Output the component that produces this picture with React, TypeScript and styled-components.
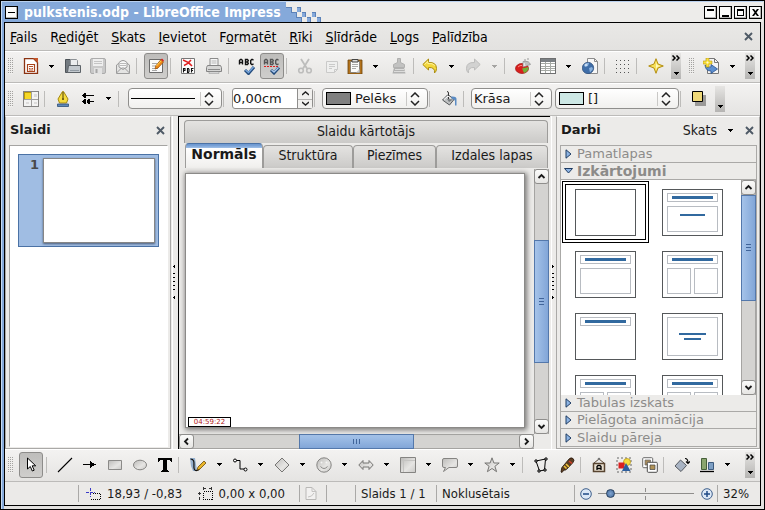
import React from 'react';
import styled, { createGlobalStyle, css } from 'styled-components';

const ui = '"DejaVu Sans Condensed", "DejaVu Sans", sans-serif';
const wide = '"DejaVu Sans", sans-serif';

const Global = createGlobalStyle`
  * { box-sizing: border-box; }
  body { margin: 0; background: #ecebe9; font-family: ${ui}; font-size: 14px; color: #1a1a1a; }
  button, input, select {
    font: inherit; color: inherit; margin: 0; padding: 0; border: 0; background: none; border-radius: 0;
  }
  svg { display: block; flex: none; }
`;

/* ---------- window frame ---------- */

const Frame = styled.div`
  display: flex;
  flex-direction: column;
  min-height: 100vh;
  border: 1px solid #000;
  padding: 0 3px 3px;
  background: linear-gradient(90deg, #c8dcf2 0 1px, #85a9da 1px 3px, transparent 3px), #e2e1df;
`;
const TitleBar = styled.header`
  display: flex;
  height: 21px;
  margin: 0 -2px;
  background: #edecea;
  border-top: 1px solid #b9d0ee;
`;
const TitleLabel = styled.div`
  display: flex;
  align-items: center;
  gap: 6px;
  padding: 0 5px 0 3px;
  background: #85a9da;
  color: #fff;
`;
const TitleText = styled.h1`
  margin: 0;
  font-size: 14px;
  line-height: 18px;
  font-weight: 700;
  white-space: nowrap;
`;
const WindowButtons = styled.div`
  display: flex;
  align-items: center;
  gap: 2px;
  margin-left: auto;
  padding-right: 1px;
`;
const WindowButton = styled.button`
  width: 13px;
  height: 13px;
  border: 1px solid #000;
  background: #fbfbfa;
  box-shadow: inset -1px -1px 0 #b5b4b2;
`;
const Body = styled.div`
  flex: 1;
  display: flex;
  flex-direction: column;
  border: 1px solid #000;
  background: #ecebe9;
`;

/* ---------- bars ---------- */

const MenuBar = styled.nav`
  display: flex;
  align-items: center;
  gap: 13px;
  height: 28px;
  padding: 0 7px 0 5px;
  background: linear-gradient(#e9e8e6, #e3e2e0);
  border-bottom: 1px solid #bcbbb9;
`;
const MenuItem = styled.button`
  line-height: 18px;
  color: #000;
  white-space: nowrap;
`;
const CloseButton = styled.button`
  width: 10px;
  height: 18px;
  margin-left: auto;
  display: grid;
  place-items: center;
`;
const PanelClose = styled(CloseButton)`
  margin: 0 5px 0 0;
`;
const ToolBar = styled.div<{ $height: number }>`
  display: flex;
  align-items: center;
  height: ${p => p.$height}px;
  padding-bottom: 2px;
  border-top: 1px solid #fff;
  border-bottom: 1px solid #bcbbb9;
  background: linear-gradient(#f3f2f1, #e5e4e2);
`;
const ToolGroup = styled.div<{ $width?: number }>`
  display: flex;
  align-items: center;
  ${p => (p.$width ? css`width: ${p.$width}px; flex: none;` : css`flex: 1; min-width: 0;`)}
`;
const Grip = styled.span`
  width: 13px;
  height: 16px;
  flex: none;
  padding: 0 5px 0 3px;
  background:
    repeating-linear-gradient(#0000 0 1px, #f0efed 1px 2px),
    repeating-linear-gradient(90deg, #a3a2a0 0 1px, #0000 1px 2px);
  background-clip: content-box;
  background-origin: content-box;
`;
const Tool = styled.button<{ $width?: number }>`
  width: ${p => p.$width ?? 25}px;
  height: 26px;
  flex: none;
  display: grid;
  place-items: center;
  &[aria-pressed='true'] {
    width: 24px;
    margin: 0 ${p => (p.$width ?? 25) - 24}px 0 0;
    border: 1px solid #8d8c8a;
    border-radius: 3px;
    background: linear-gradient(#bebdbb, #cfcecc);
  }
`;
const Divider = styled.span<{ $width: number }>`
  width: ${p => p.$width}px;
  height: 16px;
  flex: none;
  padding-left: 1px;
  background: linear-gradient(#bdbcba, #bdbcba) content-box no-repeat 0 0 / 1px 100%;
`;
const Gap = styled.span<{ $width: number }>`
  width: ${p => p.$width}px;
  flex: none;
`;
const Overflow = styled.button`
  width: 10px;
  height: 26px;
  flex: none;
  display: flex;
  flex-direction: column;
  align-items: center;
  justify-content: space-between;
  padding: 2px 0 4px;
  background: linear-gradient(#e6e5e3, #b5b4b2);
`;

/* ---------- fields ---------- */

const Combo = styled.label<{ $width: number }>`
  display: flex;
  align-items: center;
  gap: 4px;
  width: ${p => p.$width}px;
  height: 21px;
  flex: none;
  padding: 0 7px 0 2px;
  border: 1px solid #8f8e8c;
  border-radius: 4px;
  background: linear-gradient(#fff, #f1f0ee);
  font-family: ${wide};
  font-size: 13px;
`;
const ComboSelect = styled.select`
  appearance: none;
  width: 100%;
  height: 18px;
  line-height: 18px;
  outline: none;
`;
const Swatch = styled.span<{ $color: string }>`
  width: 25px;
  height: 13px;
  flex: none;
  margin-left: 1px;
  border: 1px solid #000;
  background: ${p => p.$color};
`;
const ComboFace = styled.span<{ $line?: boolean }>`
  flex: 1;
  min-width: 0;
  ${p => p.$line && css`background: linear-gradient(#000, #000) 0 50% / 64px 1px no-repeat;`}
`;
const ComboArrows = styled.span`
  padding-left: 3px;
  border-left: 1px solid #c9c8c6;
  pointer-events: none;
`;
const Spin = styled.div`
  display: flex;
  width: 81px;
  height: 21px;
  flex: none;
  border: 1px solid #8f8e8c;
  border-radius: 3px;
  background: #fff;
  font-size: 13px;
  font-family: ${wide};
`;
const SpinInput = styled.input`
  flex: 1;
  min-width: 0;
  line-height: 18px;
`;
const SpinButtons = styled.div`
  width: 15px;
  display: grid;
  grid-template-rows: 1fr 1fr;
  border-left: 1px solid #8f8e8c;
  background: #f1f0ee;
`;
const SpinButton = styled.button`
  display: grid;
  place-items: center;
  & + & { border-top: 1px solid #b5b4b2; }
`;

/* ---------- main area ---------- */

const Main = styled.main`
  display: flex;
  flex: 1 1 333px;
`;
const SidePanel = styled.aside<{ $width: number }>`
  display: flex;
  flex-direction: column;
  width: ${p => p.$width}px;
  flex: none;
  border: 1px solid #aaa9a7;
  border-top-color: #fff;
  background: #ecebe9;
`;
const PanelHead = styled.div`
  display: flex;
  align-items: center;
  height: 28px;
  padding: 0 0 2px 4px;
`;
const PanelTitle = styled.h2`
  margin: 0 auto 0 0;
  font: 700 13px/18px ${wide};
`;
const ViewMenu = styled.button`
  display: flex;
  align-items: center;
  gap: 11px;
  margin-right: 11px;
  line-height: 18px;
`;
const SlideList = styled.ol`
  flex: 1;
  margin: 0 2px 1px 3px;
  padding: 8px;
  list-style: none;
  border: 1px solid #a5a4a2;
  border-right-color: #fff;
  border-bottom-color: #fff;
  background: #fff;
`;
const SlideItem = styled.li`
  display: flex;
  gap: 4px;
  height: 93px;
  padding: 3px 3px 3px 11px;
  border: 1px solid #4b72a5;
  background: #a0bde3;
`;
const SlideNumber = styled.span`
  font: 700 13px/14px ${wide};
  color: #4a4a4a;
`;
const SlideThumb = styled.span`
  flex: 1;
  border: 1px solid #868686;
  background: #fff;
  box-shadow: 0 1px 2px #4a5c78;
`;
const Splitter = styled.div<{ $width: number }>`
  width: ${p => p.$width}px;
  flex: none;
  display: grid;
  place-items: center;
  background: linear-gradient(90deg, #ecebe9 0 1px, #fff 1px 2px, #ecebe9 2px);
`;
const Center = styled.section`
  flex: 1;
  min-width: 0;
  display: flex;
  flex-direction: column;
  border-top: 1px solid #000;
  border-left: 1px solid #000;
`;
const TabArea = styled.div`
  padding: 3px 2px 0 5px;
`;
const tabFace = css`
  border: 1px solid #9d9c9a;
  border-bottom: 0;
  border-radius: 4px 4px 0 0;
  background: linear-gradient(#e4e3e1, #cbcac8);
  white-space: nowrap;
`;
const TopTab = styled.button`
  display: block;
  width: 100%;
  height: 23px;
  padding-bottom: 2px;
  ${tabFace}
`;
const TabRow = styled.div`
  display: grid;
  grid-template-columns: 78fr 90fr 83fr 112fr;
  height: 23px;
  padding-left: 1px;
  align-items: end;
`;
const Tab = styled.button`
  height: 23px;
  padding-bottom: 4px;
  ${tabFace}
  &[aria-selected='true'] {
    height: 25px;
    padding-bottom: 4px;
    font: 700 14px/18px ${wide};
    border-color: #4b72a5 #9d9c9a;
    background: linear-gradient(#6f9ad2 0 1px, #a0c0e8 4px, #fff 4px, #f0efed);
  }
`;
const View = styled.div`
  flex: 1;
  display: grid;
  grid-template-columns: 1fr 16px;
  grid-template-rows: 1fr 15px;
`;
const Stage = styled.div`
  display: flex;
  padding: 7px 9px 6px 6px;
`;
const Slide = styled.div`
  position: relative;
  flex: 1;
  border: 1px solid #8b8a88;
  background: #fff;
  box-shadow: 1px 1px 5px 1px #7a7977;
`;
const Clock = styled.div`
  position: absolute;
  left: 2px;
  bottom: 0;
  width: 43px;
  height: 10px;
  border: 1px solid #000;
  background: #fff;
  color: #b01818;
  font: 7px/8px ${wide};
  text-align: center;
`;

/* ---------- scroll bars ---------- */

const Scroll = styled.div<{ $across?: boolean }>`
  display: flex;
  flex-direction: ${p => (p.$across ? 'row' : 'column')};
  ${p => (p.$across ? 'height: 15px;' : 'width: 15px;')}
  background: #d4d3d1;
  border: solid #a5a4a2;
  border-width: ${p => (p.$across ? '1px 0' : '0 1px')};
`;
const StageScroll = styled(Scroll)`
  margin-top: 3px;
`;
const ScrollButton = styled.button<{ $across?: boolean }>`
  width: 15px;
  height: 15px;
  flex: none;
  margin: ${p => (p.$across ? '-1px 0' : '0 -1px')};
  display: grid;
  place-items: center;
  border: 1px solid #8f8e8c;
  border-radius: 3px;
  background: linear-gradient(#fbfbfa, #e6e5e3);
`;
const ScrollGap = styled.span<{ $size: number }>`
  flex: ${p => p.$size} 1 0px;
`;
const ScrollThumb = styled.span<{ $size: number; $across?: boolean }>`
  flex: ${p => p.$size} 1 0px;
  margin: ${p => (p.$across ? '-1px 0' : '0 -1px')};
  display: grid;
  place-items: center;
  border: 1px solid #5478ab;
  background: linear-gradient(${p => (p.$across ? '180deg' : '90deg')}, #a5c3e9, #82a6d8);
`;

/* ---------- task pane ---------- */

const Sections = styled.div`
  flex: 1;
  display: flex;
  flex-direction: column;
  margin: 0 2px 1px 3px;
  border: 1px solid #aaa9a7;
`;
const Section = styled.button<{ $edge?: 'bottom' }>`
  display: flex;
  align-items: center;
  gap: 4px;
  height: 17px;
  flex: none;
  padding-left: 3px;
  border-bottom: 1px solid #aaa9a7;
  border-bottom-width: ${p => (p.$edge === 'bottom' ? 0 : 1)}px;
  color: #8c8b89;
  font: 13px/16px ${wide};
  &[aria-expanded='true'] { font: 700 14px/16px ${wide}; }
`;
const LayoutPane = styled.div`
  flex: 1 1 0px;
  min-height: 0;
  overflow: hidden;
  display: flex;
  background: #fff;
`;
const LayoutGrid = styled.div`
  flex: 1;
  display: grid;
  grid-template-columns: 87px 87px;
  grid-auto-rows: 62px;
  align-content: start;
  padding: 1px 0 0 1px;
`;
const LayoutButton = styled.button`
  display: grid;
  place-items: center;
  border: 4px double transparent;
  &[aria-pressed='true'] { border-color: #000; }
`;

/* ---------- status bar ---------- */

const Status = styled.footer`
  display: flex;
  align-items: center;
  height: 23px;
  padding-left: 73px;
  font-size: 13px;
  background: #ebeae8;
`;
const Cell = styled.div<{ $width?: number }>`
  display: flex;
  align-items: center;
  gap: 6px;
  ${p => (p.$width ? css`width: ${p.$width}px; flex: none;` : css`flex: 1;`)}
  height: 17px;
  padding-left: 5px;
  border-left: 1px solid #aaa9a7;
  white-space: nowrap;
`;
const PairCell = styled(Cell)`
  justify-content: space-between;
  padding: 0 14px 0 7px;
`;
const Pair = styled.span`
  display: flex;
  align-items: center;
  gap: 6px;
`;
const ZoomButton = styled.button`
  width: 12px;
  height: 12px;
`;
const Zoom = styled.input`
  appearance: none;
  width: 97px;
  height: 12px;
  background:
    linear-gradient(#8f8e8c, #8f8e8c) 0 5px / 96px 1px no-repeat,
    linear-gradient(#8f8e8c, #8f8e8c) 47px 0 / 1px 4px no-repeat,
    linear-gradient(#8f8e8c, #8f8e8c) 47px 8px / 1px 4px no-repeat;
  &::-webkit-slider-thumb {
    appearance: none;
    width: 9px;
    height: 9px;
    border: 1px solid #27415f;
    border-radius: 50%;
    background: radial-gradient(#7fa3cf, #44699a);
  }
`;

/* ---------- icons ---------- */

const Icon = ({ w = 16, h = 16, children, sharp }: { w?: number; h?: number; sharp?: boolean; children: React.ReactNode }) => (
  <svg width={w} height={h} viewBox={`0 0 ${w} ${h}`} fill="none" shapeRendering={sharp ? 'crispEdges' : undefined} aria-hidden="true">
    {children}
  </svg>
);

const Caret = ({ c = '#000' }: { c?: string }) => (
  <Icon w={5} h={3} sharp><path d="M0 0h5v1H0zM1 1h3v1H1zM2 2h1v1H2z" fill={c} /></Icon>
);
const More = () => (
  <Icon w={8} h={6}><path d="M.5.5 3 3 .5 5.500M4.500.5 7 3 4.500 5.500" stroke="#000" strokeWidth="1.500" /></Icon>
);
const Cross = () => (
  <Icon w={9} h={9}><path d="m1 1 7 7M8 1 1 8" stroke="#4f5a66" strokeWidth="1.900" /></Icon>
);
const Chevron = ({ turn = 0 }: { turn?: number }) => (
  <Icon w={9} h={9}><path d="m1.500 6 3-3 3 3" transform={`rotate(${turn} 4.500 4.500)`} stroke="#1a1a1a" strokeWidth="1.800" /></Icon>
);
const UpDown = () => (
  <Icon w={10} h={14}><path d="m1 5 4-4 4 4M1 9l4 4 4-4" stroke="#222" strokeWidth="1.500" /></Icon>
);
const Half = ({ down }: { down?: boolean }) => (
  <Icon w={7} h={5}><path d={down ? 'm0 1 3.500 3L7 1' : 'M0 4 3.500 1 7 4'} stroke="#222" strokeWidth="1.400" /></Icon>
);

const SpellLetters = ({ c }: { c: string }) => (
  <path d="M1.500 6.500v-4l1-1h1l1 1v4M2 4.500h2.500M7.500 1.500h2l.8 1-.8 1.500.8 1.500-.8 1h-2zM8 4h2M15.500 2.200l-1-.7h-.8l-1 1v3l1 1h.8l1-.7" stroke={c} strokeWidth="1.400" />
);

const icons: Record<string, React.ReactNode> = {
  deck: <Icon><path d="M1.500.5h9l4 4v11h-13z" fill="#fff" stroke="#8b3312" strokeWidth="1.300" /><path d="M10 0h5v5z" fill="#c4562a" /><path d="M4.500 6.500h7v7h-7z" fill="#fff" stroke="#a8431b" strokeWidth="1.200" /><path d="M6 8.500h4M6 10.500h1.500M8.500 10.500H10M6 12h4" stroke="#b5522a" /></Icon>,
  folder: <Icon><path d="M.5 1.500h5l1 2v4l-3 7h-3z" fill="#737a80" stroke="#4d5358" /><path d="M5.500 1.500h6l1 1V8h-7z" fill="#eceeef" stroke="#8e9296" /><path d="M2.500 14.500 3.500 7.500h12v7z" fill="#c3c9ce" stroke="#5d6368" /><path d="M5 12.500h9" stroke="#929ba3" /></Icon>,
  save: <Icon><rect x=".5" y=".5" width="15" height="15" rx="1.500" fill="#c9c9c9" stroke="#acacac" /><path d="M3 1h10v7H3z" fill="#eee" /><path d="M4 3.500h8M4 5.500h8" stroke="#c4c4c4" /><path d="M4 10h8v6H4z" fill="#e2e2e2" /><path d="M5.500 11h2v4h-2z" fill="#a6a6a6" /></Icon>,
  mail: <Icon><path d="M1.500 7 8 2.500 14.500 7v8.500h-13z" fill="#e4e4e3" stroke="#9c9c9c" /><path d="M4 9V4.500Q8 .5 12 4.500V9L8 11.500z" fill="#f8f8f8" stroke="#9a9a9a" /><path d="M5 5.500h6M5 7.500h6" stroke="#bbb" /><path d="m1.500 15 5-5h3l5 5" stroke="#9c9c9c" /></Icon>,
  edit: <Icon><path d="M1.500 1.500h13v13h-13z" fill="#fafafa" stroke="#6b6b6b" /><path d="M4 5.500h5M4 8h4M4 10.500h6M4 12.500h5" stroke="#a7a7a7" /><path d="m13 1.500 2.500 2.500L10 10l-3 1 .8-3.200z" fill="#f08a18" stroke="#924c08" strokeWidth=".7" /><path d="m13 1.500 1-1L16 2.500l-1 1z" fill="#d22" /><path d="m13 3-4.500 5" stroke="#ffd24b" /></Icon>,
  pdf: <Icon><path d="M1.500.5h13v15h-13z" fill="#fcfcfc" stroke="#777" /><path d="M3 2q5 1.500 9 6M4 7.500Q8 6 11 2" stroke="#e02020" strokeWidth="1.500" /><path d="M3.500 14.500v-4H5v2H3.500M7.500 10.500v4h1l.5-1v-2l-.5-1zM11.500 14.500v-4H13.500M11.500 12.500h1.500" stroke="#111" strokeWidth="1.100" /></Icon>,
  print: <Icon><path d="M4 .5h8v7H4z" fill="#f6f6f6" stroke="#8b8b8b" /><path d="M5.500 3h5M5.500 5h5" stroke="#b5b5b5" /><path d="M1.500 7.500h13l1 2v4H.5v-4z" fill="#d6d6d5" stroke="#848484" /><path d="M2 11.500h12" stroke="#8b8b8b" /><path d="M3 14h10v1.500H3z" fill="#eee" stroke="#999" strokeWidth=".6" /></Icon>,
  spell: <Icon w={18} h={17}><SpellLetters c="#111" /><path d="m7 12 3.500 3.500L16 9" stroke="#234b7c" strokeWidth="3" /><path d="m7.500 12 3 2.500L15.500 9" stroke="#78a6dc" strokeWidth="1.500" /></Icon>,
  autospell: <Icon w={18} h={17}><SpellLetters c="#555" /><path d="M1 8.500h14" stroke="#e02020" strokeDasharray="2 1" /><path d="m8 12 3 3 5-5.500" stroke="#234b7c" strokeWidth="3" /><path d="m8.500 12 2.500 2 4.500-4.500" stroke="#a8c8ee" strokeWidth="1.400" /></Icon>,
  cut: <Icon><path d="m4 1 6 9.500M12 1 6 10.500" stroke="#bdbdbc" strokeWidth="1.800" /><circle cx="4" cy="12.500" r="2.300" stroke="#bdbdbc" strokeWidth="1.600" /><circle cx="12" cy="12.500" r="2.300" stroke="#bdbdbc" strokeWidth="1.600" /></Icon>,
  copy: <Icon><path d="M2.500 3.500h11v8l-3 3h-8z" fill="#efefee" stroke="#cacac9" /><path d="M5 6.500h6M5 8.500h6M5 10.500h3M10.500 14.500v-3h3" stroke="#cacac9" /></Icon>,
  paste: <Icon><path d="M1 2h14v14H1z" fill="#b3731d" stroke="#6d4208" strokeWidth=".8" /><path d="M3.500 3.500h9v11h-9z" fill="#fbfbfa" stroke="#777" strokeWidth=".8" /><path d="M5 6.500h6M5 8.500h6M5 10.500h4" stroke="#aaa" /><path d="M5 1.500h6V4H5z" fill="#dadada" stroke="#444" /><path d="M12.500 11v3.500H9z" fill="#c9c9c9" /></Icon>,
  brush: <Icon><path d="M6.500.5h3v4l4 2v3h-11v-3l4-2z" fill="#c2c2c1" stroke="#b0b0af" /><path d="M3 9.500h10l1.500 6h-13z" fill="#b2b2b1" /><path d="M4 11.500h9M3 13.500h11" stroke="#dcdcdb" /></Icon>,
  undo: <Icon><path d="M.8 6.500 6.500 1v3.500q8-.5 8 6 0 3-2 4.500.8-6-6-5.500V12z" fill="#f3d73c" stroke="#ab8d10" /><path d="M2.500 6.500 5.800 3.500v2q5-.5 7 2" stroke="#fff3a0" /></Icon>,
  redo: <Icon><path d="M15.200 6.500 9.500 1v3.500q-8-.5-8 6 0 3 2 4.500-.8-6 6-5.500V12z" fill="#d2d2d1" stroke="#bdbdbc" /></Icon>,
  pie: <Icon><ellipse cx="7" cy="10.500" rx="6.500" ry="5" fill="#d8201e" stroke="#9c100f" strokeWidth=".7" /><path d="M7 10.500 13.500 9q.5 4-4.500 6z" fill="#6fb13a" /><path d="M8 9V3.500q6-1 7.500 3z" fill="#e4e4e3" stroke="#8c8c8c" strokeWidth=".7" /><path d="M9 2h2M12 1h2M8.500 4h5M10 6h5" stroke="#999" /><path d="M3 9q2-2 4-1.500" stroke="#ff8b80" /></Icon>,
  table: <Icon sharp><path d="M.5.5h15v15H.5z" fill="#fff" stroke="#6e6f70" /><path d="M1 1h14v3H1z" fill="#7b8084" /><path d="M1 5.500h14M1 8.500h14M1 10.500h14M1 12.500h14M5.500 4v11M10.500 4v11" stroke="#a6aaa5" /></Icon>,
  web: <Icon><path d="M5.500.5h7l3 3v12h-10z" fill="#f7f7f7" stroke="#8c8c8c" /><path d="M12.500.5v3h3" stroke="#8c8c8c" /><circle cx="6" cy="10" r="5.700" fill="#3f6ea8" stroke="#2a4b78" strokeWidth=".7" /><path d="M2 7q3-3 5-2L6 8 3 9zM7 10l3-1 1 2-3 3.500z" fill="#8bb2de" /><circle cx="4" cy="7" r="1.300" fill="#c8dcf2" /></Icon>,
  grid: <Icon w={13} h={13} sharp>{[0, 4, 8, 12].map(y => [0, 4, 8, 12].map(x => <rect key={`${x}-${y}`} x={x} y={y} width="1" height="1" fill="#555" />))}</Icon>,
  star4: <Icon><path d="M8 .7 10 6l5.300 2L10 10 8 15.300 6 10 .7 8 6 6z" fill="#f7e05a" stroke="#b38d10" /><path d="m8 4 1 3 3 1-3 1-1 3z" fill="#fff9c4" /></Icon>,
  newslide: <Icon><path d="M4.500.5h7l4 4v11h-11z" fill="#f5f5f5" stroke="#777" /><path d="M11.500.5v4h4" stroke="#777" /><path d="M2 7q1 3 6 2V6.500l6.500 4.500L8 15.500V13Q2.500 13 2 7z" fill="#5c8fd0" stroke="#28518a" strokeWidth=".8" /><path d="M3 0h3v3h3v3H6v3H3V6H0V3h3z" fill="#f8e040" stroke="#b59412" strokeWidth=".6" /><path d="M3.500 4.500h2M4.500 3.500v2" stroke="#fffbd0" /></Icon>,
  styles: <Icon sharp><path d="M.5.5h15v15H.5z" fill="#f3f3f2" stroke="#858482" /><path d="M1 1h7v7H1z" fill="#f5d726" stroke="#b8980a" /><path d="M8.500 1v14M1 8.500h14" stroke="#a09f9d" /><path d="M3 11h3v2H3zM11 11h3v2h-3zM11 3h3v3h-3z" fill="#dcdbda" /></Icon>,
  pen: <Icon><path d="M7.500.5 3 8l1.500 4h7L13 8 8.500.5z" fill="#f5dc3e" stroke="#a68810" /><path d="M8 1v6" stroke="#4c3f08" /><circle cx="8" cy="8" r="1" fill="#4c3f08" /><path d="M2.500 13h11v2.500h-11z" fill="#5f88b8" stroke="#2e4f78" strokeWidth=".8" /></Icon>,
  arrows: <Icon w={14} h={12} sharp><path d="M1 2h12v1H1zM1 2h2v1H1zM2 1h2v3H2zM3 0h2v5H3zM6 8h7v1H6zM1 8h3v1H1zM2 7h2v3H2zM3 6h2v5H3zM6 7h2v3H6zM7 6h2v5H7z" fill="#000" /></Icon>,
  bucket: <Icon><path d="m7 3.500 6 5-4.500 5.500L1.500 9z" fill="#bfc1c2" stroke="#55585a" /><path d="M7.500 8V2q0-1.500-1.500-1.500" stroke="#333" /><path d="M3 8.500 7 5l3 2.500" stroke="#fff" /><path d="M6 8l2 3 4-2.500z" fill="#777b7e" /><path d="M10 5.500q6-.5 5.500 3v6H14V10q-.5-2-3-2z" fill="#5b8cc4" /></Icon>,
  shadow: <Icon><path d="M4 4h11v11H4z" fill="#9b9a98" /><path d="M1.500.5h10v10h-10z" fill="#efd97a" stroke="#000" /></Icon>,
  select: <Icon w={12}><path d="M2.500 1v11l2.800-2.500 2 4.500 1.900-.8-2-4.400h3.500z" fill="#fff" stroke="#000" /></Icon>,
  line: <Icon><path d="M1 15 15 1" stroke="#000" strokeWidth="1.100" /></Icon>,
  arrow: <Icon w={13} h={7} sharp><path d="M0 3h11v1H0zM7 1h2v5H7zM9 2h2v3H9zM11 3h2v1h-2zM7 0h1v7H7z" fill="#000" /></Icon>,
  rect: <Icon><path d="M1.500 3.500h13v9h-13z" fill="url(#g)" stroke="#8b8a88" /></Icon>,
  ellipse: <Icon><ellipse cx="8" cy="8" rx="6.500" ry="4.800" fill="url(#g)" stroke="#858482" /></Icon>,
  text: <Icon sharp><path d="M1 1h14v4h-1l-1-2h-3v10l2 1v1H4v-1l2-1V3H3L2 5H1z" fill="#000" /></Icon>,
  curve: <Icon w={18}><path d="M1 1h5l2 13H4L2 9z" fill="#7ea0c6" opacity=".8" /><path d="M1.500 2c5 0 3 6 3.500 9 .5 4 5 3 6-1" stroke="#111" strokeWidth="1.200" /><path d="m8 13 1-3 6-6 2 2-6 6z" fill="#e9b52a" stroke="#6c4c0a" strokeWidth=".8" /></Icon>,
  connector: <Icon><path d="M3 3.500h5v8.500h5" stroke="#000" /><circle cx="3" cy="3.500" r="1.500" fill="#fff" stroke="#000" /><circle cx="13.500" cy="12.500" r="1.500" fill="#fff" stroke="#000" /></Icon>,
  diamond: <Icon><path d="m8 1 7 7-7 7-7-7z" fill="url(#g)" stroke="#777674" /></Icon>,
  smiley: <Icon><circle cx="8" cy="8" r="7.200" fill="url(#g)" stroke="#858482" /><path d="M4.500 9.500q3.500 4 7 0" stroke="#8b8a88" /><circle cx="5.500" cy="5.500" r="1" fill="#f4f4f3" /><circle cx="10.500" cy="5.500" r="1" fill="#f4f4f3" /></Icon>,
  both: <Icon><path d="M.8 8 5 3.500V6h6V3.500L15.200 8 11 12.500V10H5v2.500z" fill="url(#g)" stroke="#777674" /></Icon>,
  flow: <Icon><path d="M.5.5h15v15H.5z" fill="url(#g)" stroke="#858482" /><path d="M3.500 1v14M1 3.500h14" stroke="#c5c4c2" /></Icon>,
  callout: <Icon><path d="M2 1.500h12q1.500 0 1.500 1.500v6q0 1.500-1.500 1.500H7L1.500 14.500 3.500 10.500H2Q.5 10.500.5 9V3Q.5 1.500 2 1.500z" fill="url(#g)" stroke="#858482" /></Icon>,
  star: <Icon><path d="m8 .8 1.900 5.200h5.300l-4.300 3.300 1.700 5.400L8 11.500l-4.600 3.200 1.700-5.400L.8 6h5.300z" fill="url(#g)" stroke="#777674" /></Icon>,
  points: <Icon><path d="m3 4 9.500-2-1 11L6.500 14z" stroke="#000" /><path d="M2 3h2v2H2zM12 1h2v2h-2zM11 12h2v2h-2zM5 13h2v2H5z" fill="#fff" stroke="#000" /></Icon>,
  glue: <Icon><path d="M2 15q0-5 3-7l5-6q2-2 4-.5t0 4L9 11q-3 3-4 2l-2 2.500z" fill="#5d3e22" stroke="#26170b" strokeWidth=".8" /><path d="m7 7 3 3M5 9l2.500 2.500" stroke="#f0c43a" strokeWidth="1.600" /><path d="m10 4 3 2.500" stroke="#d4402a" strokeWidth="1.600" /></Icon>,
  fontwork: <Icon><path d="M2.500 6.500h11v8h-11z" fill="#e9dfcf" stroke="#584430" strokeWidth="1.500" /><path d="m3 6 5-4 5 4" stroke="#584430" /><circle cx="8" cy="2" r="1.300" fill="#777" /><path d="M6 13V9.500L7 8.500h2l1 1V13M6 11.500h4" stroke="#000" strokeWidth="1.300" /></Icon>,
  file: <Icon><rect x="1" y="1" width="14" height="14" stroke="#666" strokeDasharray="2 2" /><circle cx="11" cy="5" r="3.500" fill="#f6dc3e" stroke="#b3920f" strokeWidth=".7" /><path d="M2.500 5.500h6v6h-6z" fill="#d92020" /><path d="m6 14 4-8 4.500 8z" fill="#2d5f9f" /></Icon>,
  gallery: <Icon><rect x=".7" y=".7" width="10" height="10" rx="1" fill="#fff" stroke="#6b6b6b" /><path d="M3 3h5.500v5H3z" fill="#a68a5c" stroke="#6b6b6b" strokeWidth=".7" /><rect x="5.300" y="5.300" width="10" height="10" rx="1" fill="#fff" stroke="#4b4b4b" /><path d="M8 8h5v4.500H8z" fill="#b09257" stroke="#444" strokeWidth=".7" /></Icon>,
  rotate: <Icon><path d="m6.500 3 6 5.500-5.500 6L1 9z" fill="#a9b4c4" stroke="#55595f" /><path d="M11 1.500q3 0 3 4.500M12 4.500l2 2 2-2" stroke="#000" strokeWidth="1.100" /></Icon>,
  align: <Icon><path d="M2.500 1.500h5v11h-5z" fill="#8aa56e" stroke="#47603a" /><path d="M9.500 5.500h5v7h-5z" fill="#7d9fc4" stroke="#3c5a7d" /><path d="M1 14.500h14" stroke="#000" strokeWidth="1.300" /></Icon>,
  position: <Icon w={15} h={12} sharp><path d="M4.500 0v9M0 4.500h9" stroke="#3a3ac8" strokeDasharray="3 1" /><path d="M7 5.500h7.500v6H5" stroke="#000" strokeDasharray="1 1" /></Icon>,
  size: <Icon w={15} h={13} sharp><path d="M5.500 4.500h9v8h-9z" stroke="#000" strokeDasharray="1 1" /><path d="M5 1h3v1H5zM11 1h3v1h-3zM5 0h1v3H5zM13 0h1v3h-1zM1 5h1v3H1zM1 10h1v3H1zM0 6h3v1H0z" fill="#333" /></Icon>,
  doc: <Icon w={12} h={13}><path d="M1 .5h6l4 4v8H1z" fill="#f2f1f0" stroke="#b9b8b6" /><path d="M7 .5v4h4M3 10q4 0 6-4" stroke="#c4c3c1" /></Icon>,
};

const Gradient = () => (
  <svg width="0" height="0" aria-hidden="true">
    <defs><linearGradient id="g" x1="0" y1="0" x2="1" y2="1"><stop offset="0" stopColor="#bcbbb9" /><stop offset=".6" stopColor="#e6e5e3" /><stop offset="1" stopColor="#c9c8c6" /></linearGradient></defs>
  </svg>
);

const TitlePattern = () => (
  <Icon w={36} h={20} sharp>
    <path d="M0 0v20h15v-5h-5v-5H5V5H0z" fill="#85a9da" />
    <path d="M0 5h5v5h5v5h5v5" stroke="#5c82b8" />
    {[[11, 5], [16, 10], [26, 10], [21, 15], [31, 15]].map(([x, y]) => (
      <g key={`${x}-${y}`}><rect x={x} y={y} width="4" height="5" fill="#85a9da" /><path d={`M${x} ${y}h4v5h-1v-4h-3z`} fill="#5c82b8" /></g>
    ))}
  </Icon>
);

const Arrow = ({ open }: { open?: boolean }) => (
  <Icon w={9} h={10}>
    <path d={open ? 'M.5 2.500h8l-4 4.500z' : 'M2 .8v8.400L7 5z'} fill="#8db4e4" stroke="#1f3c63" />
  </Icon>
);

/* ---------- toolbar contents ---------- */

type Entry = [kind: 'tool' | 'on' | 'caret' | 'dim' | 'sep', width: number, icon?: string];

const standard: Entry[] = [
  ['tool', 25, 'deck'], ['caret', 17], ['tool', 25, 'folder'], ['tool', 25, 'save'], ['tool', 25, 'mail'], ['sep', 9],
  ['on', 25, 'edit'], ['sep', 6], ['tool', 26, 'pdf'], ['tool', 26, 'print'], ['sep', 7], ['tool', 26, 'spell'],
  ['on', 25, 'autospell'], ['sep', 6], ['tool', 28, 'cut'], ['tool', 25, 'copy'], ['tool', 22, 'paste'], ['caret', 19],
  ['tool', 27, 'brush'], ['sep', 6], ['tool', 24, 'undo'], ['caret', 18], ['tool', 26, 'redo'], ['dim', 17], ['sep', 7],
  ['tool', 25, 'pie'], ['tool', 25, 'table'], ['caret', 16], ['tool', 27, 'web'], ['sep', 7], ['tool', 25, 'grid'],
  ['sep', 7], ['tool', 27, 'star4'],
];
const drawing: Entry[] = [
  ['on', 26, 'select'], ['sep', 7], ['tool', 25, 'line'], ['tool', 25, 'arrow'], ['tool', 25, 'rect'], ['tool', 25, 'ellipse'],
  ['tool', 25, 'text'], ['sep', 7], ['tool', 27, 'curve'], ['caret', 16], ['tool', 25, 'connector'], ['caret', 17],
  ['tool', 25, 'diamond'], ['caret', 17], ['tool', 25, 'smiley'], ['caret', 17], ['tool', 25, 'both'], ['caret', 17],
  ['tool', 25, 'flow'], ['caret', 17], ['tool', 25, 'callout'], ['caret', 17], ['tool', 25, 'star'], ['caret', 17],
  ['sep', 7], ['tool', 26, 'points'], ['tool', 25, 'glue'], ['sep', 7], ['tool', 25, 'fontwork'], ['tool', 26, 'file'],
  ['tool', 25, 'gallery'], ['sep', 7], ['tool', 26, 'rotate'], ['tool', 24, 'align'], ['caret', 17],
];

const Entries = ({ list }: { list: Entry[] }) => (
  <>
    {list.map(([kind, width, icon], i) => {
      if (kind === 'sep') return <Divider key={i} $width={width} />;
      if (kind === 'caret' || kind === 'dim')
        return <Tool key={i} $width={width} aria-label="Izvēlne"><Caret c={kind === 'dim' ? '#a5a4a2' : undefined} /></Tool>;
      return <Tool key={i} $width={width} aria-label={icon} aria-pressed={kind === 'on' ? true : undefined}>{icons[icon!]}</Tool>;
    })}
  </>
);

const OverflowButton = ({ plain }: { plain?: boolean }) => (
  <Overflow aria-label="Vairāk">{plain ? <span /> : <More />}<Caret /></Overflow>
);

const SelectBox = ({ width, label, value, color, line }: { width: number; label: string; value: string; color?: string; line?: boolean }) => (
  <Combo $width={width}>
    {color && <Swatch $color={color} />}
    <ComboFace $line={line}>
      <ComboSelect aria-label={label} defaultValue={value}><option>{value}</option></ComboSelect>
    </ComboFace>
    <ComboArrows><UpDown /></ComboArrows>
  </Combo>
);

const menus: [string, string, string][] = [
  ['', 'F', 'ails'], ['R', 'e', 'diģēt'], ['', 'S', 'kats'], ['', 'I', 'evietot'], ['F', 'o', 'rmatēt'],
  ['', 'R', 'īki'], ['', 'S', 'līdrāde'], ['', 'L', 'ogs'], ['', 'P', 'alīdzība'],
];

/* ---------- slide layouts ---------- */

const Bar = ({ x, y, w, h }: { x: number; y: number; w: number; h: number }) => <rect x={x} y={y} width={w} height={h} fill="#31699f" />;
const Box = ({ x, y, w, h }: { x: number; y: number; w: number; h: number }) => (
  <rect x={x + 0.5} y={y + 0.5} width={w - 1} height={h - 1} stroke="#b8bcc2" />
);
const Heading = () => <><Box x={5} y={4} w={51} h={9} /><Bar x={10} y={7} w={41} h={3} /></>;
const layouts: React.ReactNode[] = [
  null,
  <><Heading /><Box x={5} y={17} w={51} h={26} /><Bar x={18} y={25} w={25} h={2} /></>,
  <><Heading /><Box x={5} y={17} w={51} h={26} /></>,
  <><Heading /><Box x={5} y={17} w={24} h={26} /><Box x={32} y={17} w={24} h={26} /></>,
  <Heading />,
  <><Box x={5} y={4} w={51} h={39} /><Bar x={17} y={20} w={27} h={2} /><Bar x={22} y={25} w={17} h={2} /></>,
  <><Heading /><Box x={5} y={17} w={24} h={26} /><Box x={32} y={17} w={24} h={12} /></>,
  <><Heading /><Box x={5} y={17} w={24} h={12} /><Box x={32} y={17} w={24} h={26} /></>,
];

const Handle = ({ left }: { left?: boolean }) => (
  <Icon w={3} h={35} sharp>
    <path d={left ? 'M0 1h2v1H0zM1 0h1v3H1zM0 32h2v1H0zM1 31h1v3H1z' : 'M0 1h2v1H0zM0 0h1v3H0zM0 32h2v1H0zM0 31h1v3H0z'} fill="#000" />
    <path d="M0 8h2v1H0zM0 12h2v1H0zM0 16h2v1H0zM0 20h2v1H0zM0 24h2v1H0z" fill="#000" />
  </Icon>
);
const Ridge = ({ across }: { across?: boolean }) => (
  <Icon w={7} h={7} sharp><path d={across ? 'M.5 1v5M3.500 1v5M6.500 1v5' : 'M1 .5h5M1 3.500h5M1 6.500h5'} stroke="#41659a" /></Icon>
);

export default function App() {
  return (
    <Frame>
      <Global />
      <TitleBar>
        <TitleLabel>
          <WindowButton aria-label="Izvēlne"><Icon w={11} h={11} sharp><path d="M2 5h7v1H2z" fill="#000" /></Icon></WindowButton>
          <TitleText>pulkstenis.odp - LibreOffice Impress</TitleText>
        </TitleLabel>
        <TitlePattern />
        <WindowButtons>
          {['M2 2h7v2H2z', 'M2 8h7v2H2z', 'M2 2h7v7H2zM3 4v4h5V4z', 'M2 2h2l1.500 2L7 2h2L6.500 5.500 9 9H7L5.500 7 4 9H2l2.500-3.500z'].map((d, i) => (
            <WindowButton key={d} aria-label={['Sarullēt', 'Minimizēt', 'Maksimizēt', 'Aizvērt'][i]}>
              <Icon w={11} h={11}><path d={d} fill="#000" fillRule="evenodd" /></Icon>
            </WindowButton>
          ))}
        </WindowButtons>
      </TitleBar>
      <Body>
        <MenuBar>
          {menus.map(([a, b, c]) => <MenuItem key={a + b + c}>{a}<u>{b}</u>{c}</MenuItem>)}
          <CloseButton aria-label="Aizvērt dokumentu"><Cross /></CloseButton>
        </MenuBar>

        <ToolBar $height={32}>
          <ToolGroup><Grip /><Entries list={standard} /></ToolGroup>
          <OverflowButton />
          <ToolGroup $width={79}>
            <Gap $width={5} /><Grip /><Tool $width={24} aria-label="Jauns slaids">{icons.newslide}</Tool>
            <Tool $width={18} aria-label="Izvēlne"><Caret /></Tool><Gap $width={4} /><OverflowButton />
          </ToolGroup>
        </ToolBar>

        <ToolBar $height={33}>
          <Grip />
          <Tool $width={25} aria-label="Stili">{icons.styles}</Tool><Divider $width={7} />
          <Tool $width={26} aria-label="Līnija">{icons.pen}</Tool>
          <Tool $width={24} aria-label="Bultas">{icons.arrows}</Tool>
          <Tool $width={17} aria-label="Izvēlne"><Caret /></Tool><Divider $width={11} />
          <SelectBox width={94} label="Līnijas stils" value="" line />
          <Divider $width={10} />
          <Spin>
            <SpinInput aria-label="Līnijas platums" defaultValue="0,00cm" />
            <SpinButtons>
              <SpinButton aria-label="Palielināt"><Half /></SpinButton>
              <SpinButton aria-label="Samazināt"><Half down /></SpinButton>
            </SpinButtons>
          </Spin>
          <Divider $width={9} />
          <SelectBox width={106} label="Līnijas krāsa" value="Pelēks" color="#808080" />
          <Divider $width={7} />
          <Tool $width={27} aria-label="Laukums">{icons.bucket}</Tool><Divider $width={9} />
          <SelectBox width={81} label="Aizpildījums" value="Krāsa" />
          <Gap $width={3} />
          <SelectBox width={124} label="Aizpildījuma krāsa" value="[]" color="#cde8e5" />
          <Divider $width={7} />
          <Tool $width={26} aria-label="Ēna">{icons.shadow}</Tool><Gap $width={3} />
          <OverflowButton plain />
        </ToolBar>

        <Main>
          <SidePanel $width={166}>
            <PanelHead>
              <PanelTitle>Slaidi</PanelTitle>
              <PanelClose aria-label="Aizvērt"><Cross /></PanelClose>
            </PanelHead>
            <SlideList><SlideItem><SlideNumber>1</SlideNumber><SlideThumb /></SlideItem></SlideList>
          </SidePanel>
          <Splitter $width={7}><Handle left /></Splitter>

          <Center>
            <TabArea role="tablist">
              <TopTab role="tab">Slaidu kārtotājs</TopTab>
              <TabRow>
                <Tab role="tab" aria-selected="true">Normāls</Tab>
                <Tab role="tab">Struktūra</Tab>
                <Tab role="tab">Piezīmes</Tab>
                <Tab role="tab">Izdales lapas</Tab>
              </TabRow>
            </TabArea>
            <View>
              <Stage><Slide><Clock>04:59:22</Clock></Slide></Stage>
              <StageScroll>
                <ScrollButton aria-label="Augšup"><Chevron /></ScrollButton>
                <ScrollGap $size={56} /><ScrollThumb $size={123}><Ridge /></ScrollThumb><ScrollGap $size={56} />
                <ScrollButton aria-label="Lejup"><Chevron turn={180} /></ScrollButton>
              </StageScroll>
              <Scroll $across>
                <ScrollButton $across aria-label="Pa kreisi"><Chevron turn={-90} /></ScrollButton>
                <ScrollGap $size={105} /><ScrollThumb $size={114} $across><Ridge across /></ScrollThumb><ScrollGap $size={105} />
                <ScrollButton $across aria-label="Pa labi"><Chevron turn={90} /></ScrollButton>
              </Scroll>
            </View>
          </Center>

          <Splitter $width={6}><Handle /></Splitter>
          <SidePanel $width={204}>
            <PanelHead>
              <PanelTitle>Darbi</PanelTitle>
              <ViewMenu>Skats<Caret /></ViewMenu>
              <PanelClose aria-label="Aizvērt"><Cross /></PanelClose>
            </PanelHead>
            <Sections>
              <Section aria-expanded={false}><Arrow />Pamatlapas</Section>
              <Section aria-expanded><Arrow open />Izkārtojumi</Section>
              <LayoutPane>
                <LayoutGrid>
                  {layouts.map((art, i) => (
                    <LayoutButton key={i} aria-label={`Izkārtojums ${i + 1}`} aria-pressed={i === 0}>
                      <Icon w={61} h={47} sharp><rect x=".5" y=".5" width="60" height="46" stroke="#55585a" />{art}</Icon>
                    </LayoutButton>
                  ))}
                </LayoutGrid>
                <Scroll>
                  <ScrollButton aria-label="Augšup"><Chevron /></ScrollButton>
                  <ScrollThumb $size={105}><Ridge /></ScrollThumb><ScrollGap $size={80} />
                  <ScrollButton aria-label="Lejup"><Chevron turn={180} /></ScrollButton>
                </Scroll>
              </LayoutPane>
              <Section aria-expanded={false}><Arrow />Tabulas izskats</Section>
              <Section aria-expanded={false}><Arrow />Pielāgota animācija</Section>
              <Section aria-expanded={false} $edge="bottom"><Arrow />Slaidu pāreja</Section>
            </Sections>
          </SidePanel>
        </Main>

        <ToolBar $height={33}>
          <ToolGroup><Grip /><Gap $width={1} /><Entries list={drawing} /></ToolGroup>
          <OverflowButton />
          <Gap $width={5} />
        </ToolBar>

        <Status>
          <PairCell $width={221}>
            <Pair>{icons.position}18,93 / -0,83</Pair>
            <Pair>{icons.size}0,00 x 0,00</Pair>
          </PairCell>
          <Cell $width={27}>{icons.doc}</Cell>
          <Cell $width={29} />
          <Cell $width={81}>Slaids 1 / 1</Cell>
          <Cell>Noklusētais</Cell>
          <Cell $width={143}>
            <ZoomButton aria-label="Tālināt"><Icon w={12} h={12}><circle cx="6" cy="6" r="5.300" fill="#dce8f6" stroke="#3e5f8c" /><path d="M3 6h6" stroke="#1f4a86" strokeWidth="1.500" /></Icon></ZoomButton>
            <Zoom type="range" aria-label="Mērogs" min={0} max={100} defaultValue={9} />
            <ZoomButton aria-label="Tuvināt"><Icon w={12} h={12}><circle cx="6" cy="6" r="5.300" fill="#dce8f6" stroke="#3e5f8c" /><path d="M3 6h6M6 3v6" stroke="#1f4a86" strokeWidth="1.500" /></Icon></ZoomButton>
          </Cell>
          <Cell $width={43}>32%</Cell>
        </Status>
      </Body>
      <Gradient />
    </Frame>
  );
}
